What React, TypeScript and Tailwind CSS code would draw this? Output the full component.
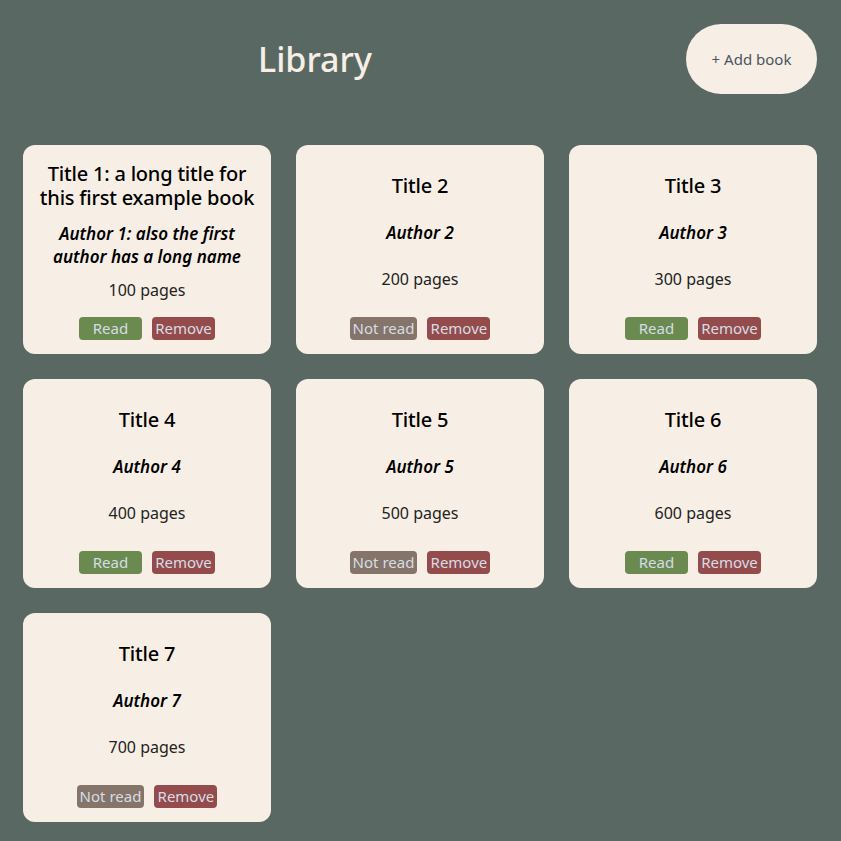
import React from "react";

type Book = { title: string; author: string; pages: number; read: boolean };

const books: Book[] = [
  { title: "Title 1: a long title for this first example book", author: "Author 1: also the first author has a long name", pages: 100, read: true },
  { title: "Title 2", author: "Author 2", pages: 200, read: false },
  { title: "Title 3", author: "Author 3", pages: 300, read: true },
  { title: "Title 4", author: "Author 4", pages: 400, read: true },
  { title: "Title 5", author: "Author 5", pages: 500, read: false },
  { title: "Title 6", author: "Author 6", pages: 600, read: true },
  { title: "Title 7", author: "Author 7", pages: 700, read: false },
];

const font = { fontFamily: "'Noto Sans', 'Open Sans', sans-serif" };

function Card({ b }: { b: Book }) {
  return (
    <div className="bg-[#f7efe5] rounded-[12px] h-[209px] flex flex-col items-center px-[10px] pt-[5px] pb-[14px]">
      <div className="flex-1 flex flex-col justify-evenly items-center text-center w-full">
        <div className="text-[20px] leading-[24px] font-medium text-black tracking-[-0.2px] text-balance">{b.title}</div>
        <div className="text-[17px] leading-[23px] italic font-semibold text-black text-balance">{b.author}</div>
        <div className="text-[16px] leading-[22px] text-[#222]">{b.pages} pages</div>
      </div>
      <div className="mt-1 flex gap-[10px]">
        <button
          className={
            b.read
              ? "min-w-[63px] h-[23px] px-[3px] rounded-[4px] bg-[#6a8a50] text-[#d4dde6] text-[15px] leading-[23px]"
              : "min-w-[63px] h-[23px] px-[3px] rounded-[4px] bg-[#857469] text-[#d4dde6] text-[15px] leading-[23px]"
          }
        >
          {b.read ? "Read" : "Not read"}
        </button>
        <button className="min-w-[63px] h-[23px] px-[3px] rounded-[4px] bg-[#944b4b] text-[#d4dde6] text-[15px] leading-[23px]">
          Remove
        </button>
      </div>
    </div>
  );
}

export default function App() {
  return (
    <div style={font} className="min-h-[841px] w-full bg-[#5a6863] pl-[23px] pr-[24px] pt-[24px] pb-[17px]">
      <header className="flex items-center h-[70px]">
        <h1 className="ml-[235px] text-[34px] font-medium text-[#f7efe5]">Library</h1>
        <button className="ml-auto w-[131px] h-[70px] rounded-full bg-[#f7efe5] text-[#4a5560] text-[15px]">
          + Add book
        </button>
      </header>
      <main className="mt-[51px] grid grid-cols-3 gap-[25px]">
        {books.map((b) => (
          <Card key={b.title} b={b} />
        ))}
      </main>
    </div>
  );
}
